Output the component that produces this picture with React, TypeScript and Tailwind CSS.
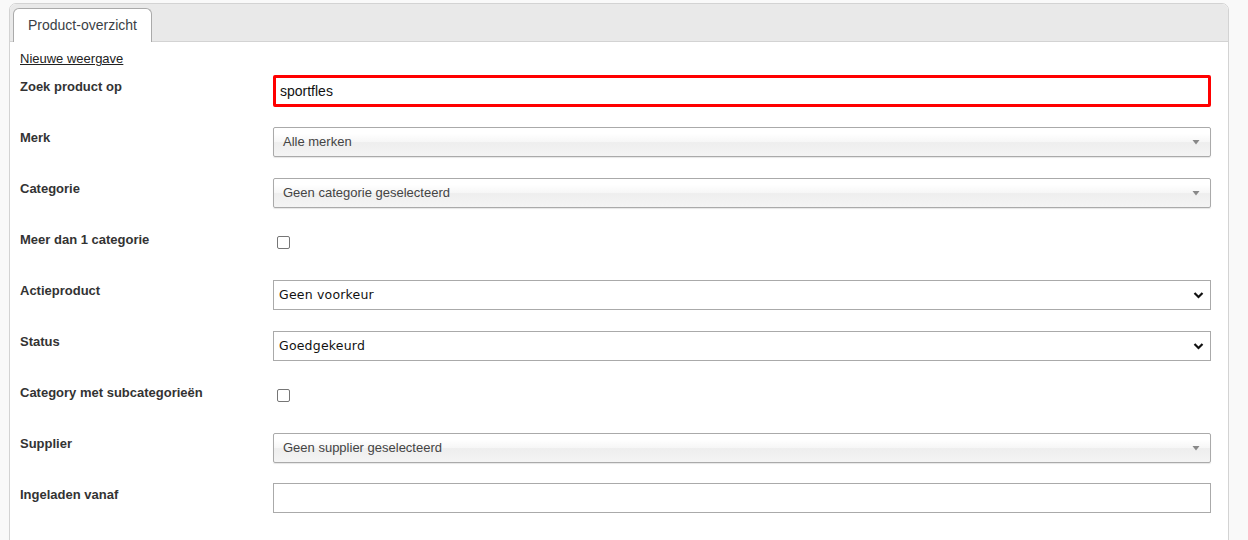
import React from 'react';

const labelCls = "text-[13px] leading-[16px] font-bold text-[#333]";

function ChosenSelect({ value }: { value: string }) {
  return (
    <div className="flex h-[30px] items-center justify-between rounded-[2px] border border-[#aaa] bg-[linear-gradient(#fff_20%,#f6f6f6_50%,#eee_52%,#f4f4f4_100%)] pl-[9px] pr-[9px] shadow-[0_1px_1px_rgba(0,0,0,0.1)]">
      <span className="text-[13px] text-[#444]">{value}</span>
      <svg width="8" height="6" viewBox="0 0 8 6" className="mr-[1px]">
        <path d="M0.5 1 H7.5 L4 5.5 Z" fill="#888" />
      </svg>
    </div>
  );
}

function NativeSelect({ value }: { value: string }) {
  return (
    <div className="flex h-[30px] items-center justify-between border border-[#aaa] bg-white pl-[5px] pr-[6px]">
      <span className="font-['DejaVu_Sans',sans-serif] text-[12.5px] tracking-[0.2px] text-[#111]">{value}</span>
      <svg width="11" height="8" viewBox="0 0 11 8">
        <path d="M1.5 2 L5.5 6 L9.5 2" fill="none" stroke="#111" strokeWidth="2.2" />
      </svg>
    </div>
  );
}

function Checkbox() {
  return (
    <div className="ml-[4px] mt-[7px] h-[13px] w-[13px] rounded-[2px] border border-[#767676] bg-white" />
  );
}

function Row({ label, children, h = "h-[51px]", pt = "pt-[3px]" }: { label: string; children: React.ReactNode; h?: string; pt?: string }) {
  return (
    <div className={`grid grid-cols-[253px_1fr] ${h}`}>
      <div className={`${labelCls} ${pt}`}>{label}</div>
      <div>{children}</div>
    </div>
  );
}

export default function App() {
  return (
    <div className="min-h-[540px] overflow-hidden bg-[#f9f9f9] pl-[9px] pr-[19px] pt-[3px] font-['Liberation_Sans',Arial,sans-serif]">
      <div className="min-h-[560px] rounded-t-[7px] border border-[#d3d3d3] bg-white">
        <div className="flex h-[38px] items-end rounded-t-[6px] border-b border-[#d3d3d3] bg-[#e9e9e9] px-[3px]">
          <div className="-mb-px flex h-[34px] items-center rounded-t-[6px] border border-b-0 border-[#aaa] bg-white px-[14px] text-[14px] text-[#3b3f46]">
            Product-overzicht
          </div>
        </div>
        <div className="pl-[10px] pr-[17px] pt-[9px]">
          <a className="block text-[13px] leading-[16px] text-[#222] underline">Nieuwe weergave</a>
          <div className="mt-[8px]">
            <Row label="Zoek product op" h="h-[52px]" pt="pt-[4px]">
              <div className="flex h-[32px] items-center rounded-[2px] border-[3px] border-[#f00] bg-white pl-[4px] text-[14px] text-[#111]">
                sportfles
              </div>
            </Row>
            <Row label="Merk">
              <ChosenSelect value="Alle merken" />
            </Row>
            <Row label="Categorie">
              <ChosenSelect value="Geen categorie geselecteerd" />
            </Row>
            <Row label="Meer dan 1 categorie">
              <Checkbox />
            </Row>
            <Row label="Actieproduct">
              <NativeSelect value="Geen voorkeur" />
            </Row>
            <Row label="Status">
              <NativeSelect value="Goedgekeurd" />
            </Row>
            <Row label="Category met subcategorieën">
              <Checkbox />
            </Row>
            <Row label="Supplier" h="h-[50px]">
              <ChosenSelect value="Geen supplier geselecteerd" />
            </Row>
            <Row label="Ingeladen vanaf" pt="pt-[4px]">
              <div className="h-[30px] border border-[#aaa] bg-white" />
            </Row>
          </div>
        </div>
      </div>
    </div>
  );
}
